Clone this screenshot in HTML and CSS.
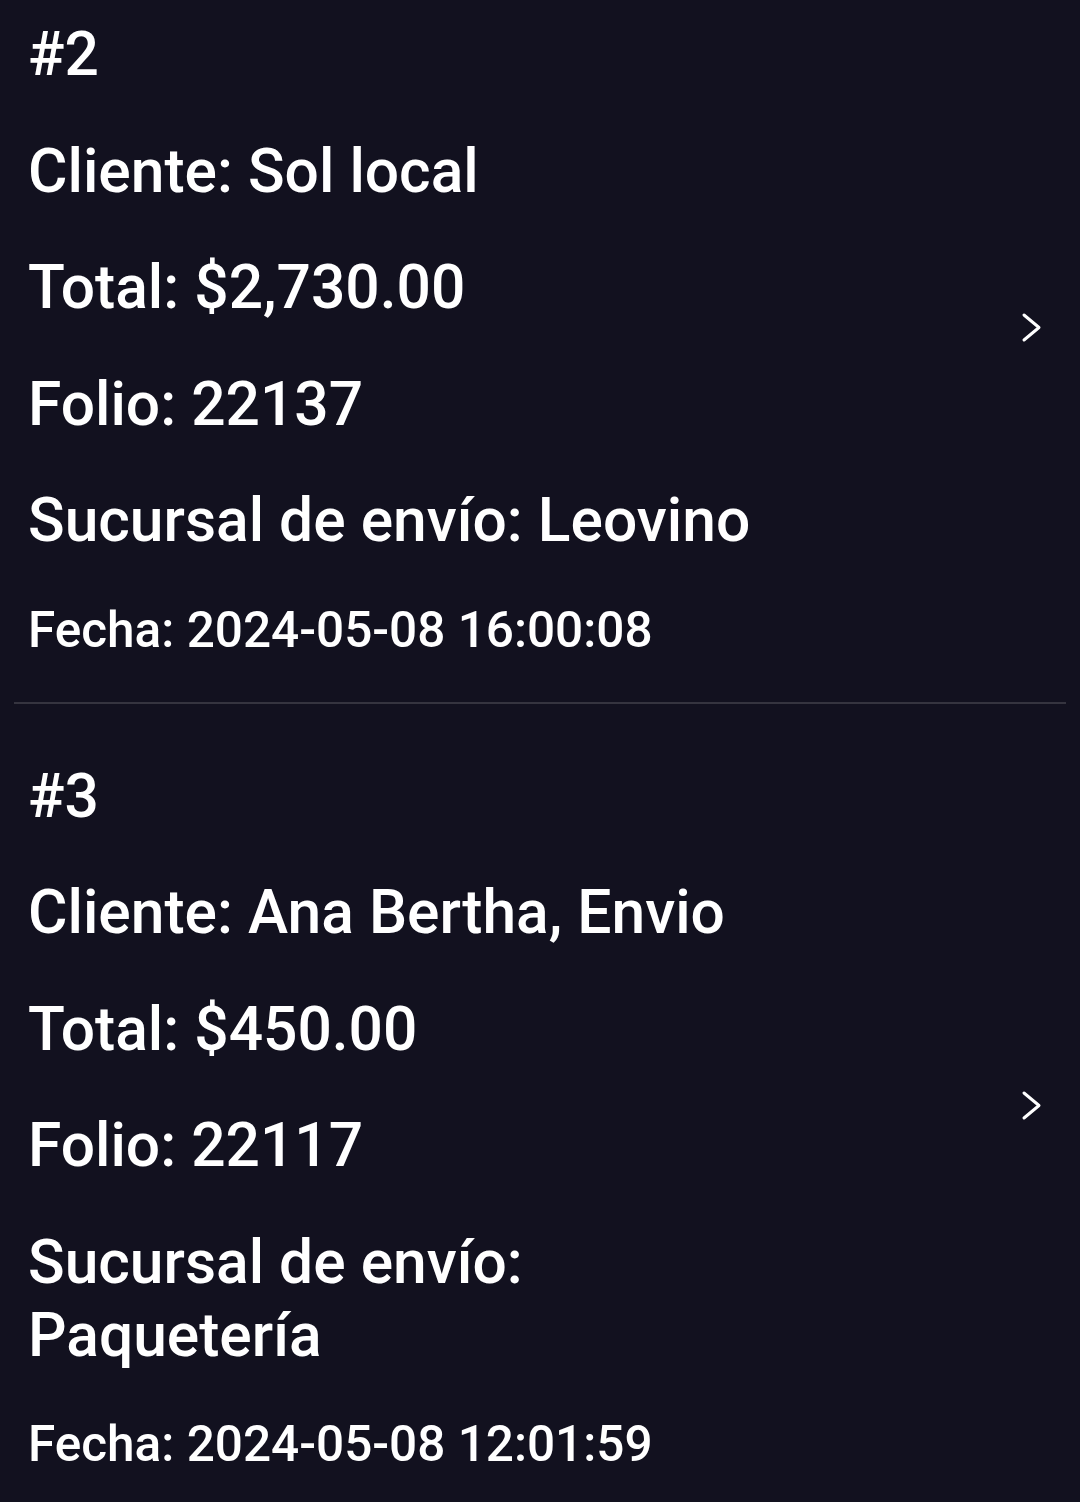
FILE: index.html
```html
<!DOCTYPE html>
<html lang="es">
<head>
<meta charset="utf-8">
<link rel="stylesheet" href="styles.css">
</head>
<body>
<div class="list">
  <div class="item">
    <div class="info">
      <p class="line">#2</p>
      <p class="line">Cliente: Sol local</p>
      <p class="line">Total: $2,730.00</p>
      <p class="line">Folio: 22137</p>
      <p class="line">Sucursal de envío: Leovino</p>
      <p class="line date">Fecha: 2024-05-08 16:00:08</p>
    </div>
    <svg class="chev" viewBox="0 0 21 31" width="21" height="31"><path d="M3 3L18 15.5L3 28" fill="none" stroke="#fff" stroke-width="3" stroke-linecap="round" stroke-linejoin="round"/></svg>
  </div>
  <div class="divider"></div>
  <div class="item">
    <div class="info">
      <p class="line">#3</p>
      <p class="line">Cliente: Ana Bertha, Envio</p>
      <p class="line">Total: $450.00</p>
      <p class="line">Folio: 22117</p>
      <p class="line">Sucursal de envío: Paquetería</p>
      <p class="line date">Fecha: 2024-05-08 12:01:59</p>
    </div>
    <svg class="chev" viewBox="0 0 21 31" width="21" height="31"><path d="M3 3L18 15.5L3 28" fill="none" stroke="#fff" stroke-width="3" stroke-linecap="round" stroke-linejoin="round"/></svg>
  </div>
</div>
</body>
</html>
```
FILE: styles.css
```css
html, body {
  margin: 0;
  padding: 0;
  background: #12111f;
}
body {
  font-family: Roboto, "Noto Sans", sans-serif;
  color: #ffffff;
  overflow: hidden;
}
.list {
  display: flex;
  flex-direction: column;
}
.item {
  display: flex;
  align-items: center;
  padding: 18px 38px 20px 28px;
}
.info {
  flex: 1;
  max-width: 760px;
}
.line {
  margin: 0 0 43.5px 0;
  font-size: 60.5px;
  line-height: 73px;
  font-weight: 500;
}
.line.date {
  font-size: 49.5px;
  line-height: 58px;
  margin-bottom: 0;
}
.chev {
  margin-left: auto;
  margin-bottom: 22px;
  flex-shrink: 0;
}
.divider {
  height: 2px;
  background: #35343f;
  margin: 23px 14px 38px 14px;
}
```
